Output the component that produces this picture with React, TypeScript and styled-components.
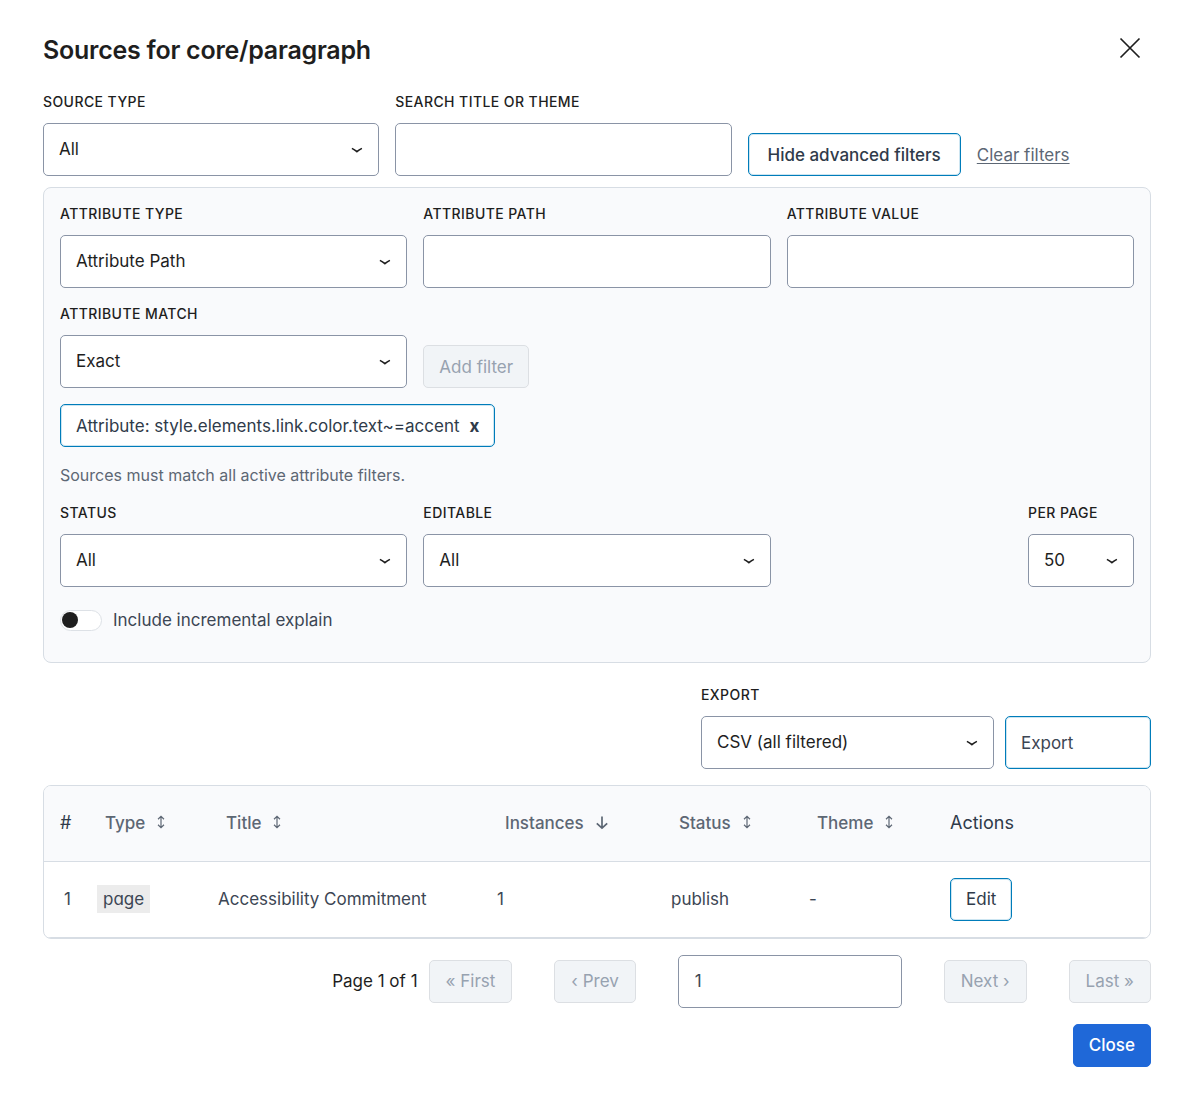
import React, { useId, useState } from "react";
import styled, { createGlobalStyle, css } from "styled-components";

const color = {
  ink: "#1e1e1e",
  text: "#3c4654",
  muted: "#5d6774",
  heading: "#2f3b4a",
  disabled: "#97a2b0",
  border: "#8a94a6",
  line: "#d7dde4",
  panel: "#f9fafc",
  accent: "#007cba",
  primary: "#1f68d8",
};

const GlobalStyle = createGlobalStyle`
  *, *::before, *::after { box-sizing: border-box; }
  body {
    margin: 0;
    background: #fff;
    color: ${color.text};
    font-family: Inter, "Liberation Sans", sans-serif;
    font-size: 17px;
    line-height: 24px;
  }
  button, input, select { font: inherit; margin: 0; }
`;

const Dialog = styled.main`
  display: flex;
  flex-direction: column;
  padding: 28px 43px 32px;
`;

const Header = styled.header`
  display: flex;
  justify-content: space-between;
  align-items: center;
  height: 40px;
  margin-bottom: 24px;
`;

const Title = styled.h1`
  margin: 0;
  padding-top: 4px;
  color: ${color.ink};
  font-size: 25px;
  line-height: 32px;
  font-weight: 600;
  letter-spacing: -0.01em;
`;

const IconButton = styled.button`
  display: flex;
  padding: 9px;
  border: 0;
  background: none;
  color: ${color.ink};
`;

const TopFilters = styled.div`
  display: grid;
  grid-template-columns: 5fr 5fr 6fr;
  align-items: end;
  gap: 16px;
  margin-bottom: 11px;
`;

const Actions = styled.div`
  display: flex;
  align-items: center;
  gap: 16px;
`;

const Panel = styled.section`
  display: flex;
  flex-direction: column;
  gap: 16px;
  padding: 16px 16px 29px;
  margin-bottom: 22px;
  border: 1px solid ${color.line};
  border-radius: 8px;
  background: ${color.panel};
`;

const FieldGrid = styled.div`
  display: grid;
  grid-template-columns: repeat(3, minmax(0, 1fr));
  align-items: end;
  gap: 16px;
`;

const FieldBox = styled.div<{ $width?: number; $end?: boolean }>`
  display: flex;
  flex-direction: column;
  gap: 11px;
  width: ${(p) => (p.$width ? `${p.$width}px` : "auto")};
  justify-self: ${(p) => (p.$end ? "end" : "stretch")};
`;

const Label = styled.label`
  color: ${color.ink};
  font-size: 14px;
  line-height: 20px;
  font-weight: 500;
  text-transform: uppercase;
  letter-spacing: 0.03em;
`;

const control = css`
  width: 100%;
  height: 53px;
  padding: 0 16px;
  border: 1px solid ${color.border};
  border-radius: 5px;
  background: #fff;
  color: ${color.ink};
`;

const Input = styled.input`
  ${control}
`;

const SelectBox = styled.div`
  display: grid;
  grid-template-columns: minmax(0, 1fr);
  align-items: center;

  > * { grid-area: 1 / 1; }
  > svg {
    justify-self: end;
    margin-right: 16px;
    pointer-events: none;
  }
`;

const NativeSelect = styled.select`
  ${control}
  appearance: none;
  padding: 0 40px 2px 15px;
`;

const Button = styled.button<{ $variant?: "primary" | "wide"; $medium?: boolean; $pad?: number }>`
  height: 43px;
  padding: 0 ${(p) => p.$pad ?? 15}px;
  border: 1px solid ${color.accent};
  border-radius: 5px;
  background: #fff;
  box-shadow: inset 0 0 0 1px #007cba33;
  color: ${color.heading};
  font-weight: ${(p) => (p.$medium ? 500 : 400)};
  white-space: nowrap;

  ${(p) =>
    p.$variant === "primary" &&
    css`
      border-color: ${color.primary};
      background: ${color.primary};
      box-shadow: none;
      color: #fff;
    `}
  ${(p) =>
    p.$variant === "wide" &&
    css`
      width: 146px;
      height: 53px;
      text-align: left;
      color: ${color.text};
    `}
  &:disabled {
    border-color: #dcdfe3;
    background: #f1f4f7;
    box-shadow: none;
    color: ${color.disabled};
  }
`;

const TextLink = styled.a`
  color: ${color.muted};
  text-decoration: underline;
  text-underline-offset: 2px;
  text-decoration-thickness: 1px;
`;

const Chip = styled.button`
  display: flex;
  align-items: center;
  align-self: flex-start;
  gap: 10px;
  height: 43px;
  padding: 0 15px;
  border: 1px solid ${color.accent};
  border-radius: 5px;
  background: #fff;
  box-shadow: inset 0 0 0 1px #007cba33;
  color: ${color.heading};
`;

const Hint = styled.p`
  margin: 0;
  color: ${color.muted};
  font-size: 16px;
`;

const ToggleLabel = styled.label`
  display: flex;
  align-items: center;
  align-self: flex-start;
  gap: 11px;
  height: 26px;
  margin-top: 4px;
`;

const Toggle = styled.input`
  appearance: none;
  display: flex;
  align-items: center;
  width: 42px;
  height: 21px;
  margin: 0;
  padding: 0 1px;
  border: 1px solid #dde1e6;
  border-radius: 11px;
  background: #fff;

  &::before {
    content: "";
    width: 16px;
    height: 16px;
    border-radius: 50%;
    background: ${color.ink};
  }
  &:checked { justify-content: flex-end; }
`;

const ExportBar = styled.div`
  display: flex;
  justify-content: flex-end;
  align-items: flex-end;
  gap: 11px;
  margin-bottom: 16px;
`;

const TableFrame = styled.div`
  overflow: hidden;
  margin-bottom: 16px;
  border: 1px solid ${color.line};
  border-radius: 8px;
`;

const Table = styled.table`
  width: 100%;
  table-layout: fixed;
  border-collapse: collapse;

  th, td {
    height: 76px;
    padding: 0 8px 0 16px;
    border-bottom: 1px solid ${color.line};
    text-align: left;
    font-weight: 400;
    white-space: nowrap;
  }
  th {
    height: 75px;
    background: ${color.panel};
    color: ${color.heading};
    font-size: 18px;
  }
  td:first-child {
    padding-right: 10px;
    text-align: right;
  }
`;

const Col = styled.col<{ $width?: number }>`
  width: ${(p) => (p.$width ? `${p.$width}px` : "auto")};
`;

const SortButton = styled.button`
  display: flex;
  align-items: center;
  gap: 11px;
  padding: 0 8px;
  border: 0;
  background: none;
  color: ${color.muted};
  font-size: 17px;
  font-weight: 500;
`;

const Code = styled.code`
  padding: 4px 6px;
  background: #ececec;
  font-family: Inter, sans-serif;
  font-feature-settings: "cv11";
`;

const Pagination = styled.nav`
  display: flex;
  justify-content: flex-end;
  align-items: center;
  gap: 11px;
  margin-bottom: 16px;
  color: ${color.ink};
`;

const PageControls = styled.div`
  display: flex;
  align-items: center;
  gap: 42px;
`;

const PageInput = styled(Input)`
  width: 224px;
  color: ${color.text};
`;

const Footer = styled.footer`
  display: flex;
  justify-content: flex-end;
`;

const Chevron = () => (
  <svg width="12" height="8" viewBox="0 0 12 8" fill="none" stroke="#1e1e1e" strokeWidth="1.6" aria-hidden="true">
    <path d="M0.9 2.4C3 3.4 4.4 4.4 5.9 5.7 7.4 4.4 8.8 3.4 10.9 2.4" />
  </svg>
);

const CloseIcon = () => (
  <svg width="24" height="24" viewBox="0 0 24 24" fill="none" stroke="currentColor" strokeWidth="1.7" aria-hidden="true">
    <path d="M2.5 2.5 21.5 21.5M21.5 2.5 2.5 21.5" />
  </svg>
);

const SortIcon = () => (
  <svg width="10" height="16" viewBox="0 0 10 16" fill="none" stroke="currentColor" strokeWidth="1.2" aria-hidden="true">
    <path d="M5 1.5V12.5M2 4.2 5 1.4 8 4.2M2 9.8 5 12.6 8 9.8" />
  </svg>
);

const DownIcon = () => (
  <svg width="14" height="14" viewBox="0 0 14 14" fill="none" stroke="currentColor" strokeWidth="1.7" aria-hidden="true">
    <path d="M7 0.5V12.5M1.8 7.3 7 12.2 12.2 7.3" />
  </svg>
);

type FieldProps = { label: string; options?: string[]; width?: number; end?: boolean };

function Field({ label, options, width, end }: FieldProps) {
  const id = useId();
  return (
    <FieldBox $width={width} $end={end}>
      <Label htmlFor={id}>{label}</Label>
      {options ? (
        <SelectBox>
          <NativeSelect id={id}>
            {options.map((o) => (
              <option key={o}>{o}</option>
            ))}
          </NativeSelect>
          <Chevron />
        </SelectBox>
      ) : (
        <Input id={id} type="text" />
      )}
    </FieldBox>
  );
}

const columns = [
  { name: "#", width: 37 },
  { name: "Type", width: 121, sort: "both" },
  { name: "Title", width: 279, sort: "both" },
  { name: "Instances", width: 174, sort: "down" },
  { name: "Status", width: 138, sort: "both" },
  { name: "Theme", width: 141, sort: "both" },
  { name: "Actions" },
];

const rows = [{ type: "page", title: "Accessibility Commitment", instances: 1, status: "publish", theme: "-" }];

export default function App() {
  const [page, setPage] = useState("1");
  return (
    <>
      <GlobalStyle />
      <Dialog>
        <Header>
          <Title>Sources for core/paragraph</Title>
          <IconButton type="button" aria-label="Close dialog">
            <CloseIcon />
          </IconButton>
        </Header>

        <TopFilters>
          <Field label="Source type" options={["All"]} />
          <Field label="Search title or theme" />
          <Actions>
            <Button type="button" $medium $pad={19}>Hide advanced filters</Button>
            <TextLink href="#clear">Clear filters</TextLink>
          </Actions>
        </TopFilters>

        <Panel>
          <FieldGrid>
            <Field label="Attribute type" options={["Attribute Path"]} />
            <Field label="Attribute path" />
            <Field label="Attribute value" />
          </FieldGrid>
          <FieldGrid>
            <Field label="Attribute match" options={["Exact"]} />
            <Actions>
              <Button type="button" disabled>Add filter</Button>
            </Actions>
          </FieldGrid>
          <Chip type="button">
            Attribute: style.elements.link.color.text~=accent <b>x</b>
          </Chip>
          <Hint>Sources must match all active attribute filters.</Hint>
          <FieldGrid>
            <Field label="Status" options={["All"]} />
            <Field label="Editable" options={["All"]} />
            <Field label="Per page" options={["50"]} width={106} end />
          </FieldGrid>
          <ToggleLabel>
            <Toggle type="checkbox" role="switch" />
            Include incremental explain
          </ToggleLabel>
        </Panel>

        <ExportBar>
          <Field label="Export" options={["CSV (all filtered)"]} width={293} />
          <Button type="button" $variant="wide">Export</Button>
        </ExportBar>

        <TableFrame>
          <Table>
            <colgroup>
              {columns.map((c) => (
                <Col key={c.name} $width={c.width} />
              ))}
            </colgroup>
            <thead>
              <tr>
                {columns.map((c) => (
                  <th key={c.name} scope="col">
                    {c.sort ? (
                      <SortButton type="button">
                        {c.name}
                        {c.sort === "down" ? <DownIcon /> : <SortIcon />}
                      </SortButton>
                    ) : (
                      c.name
                    )}
                  </th>
                ))}
              </tr>
            </thead>
            <tbody>
              {rows.map((r, i) => (
                <tr key={r.title}>
                  <td>{i + 1}</td>
                  <td><Code>{r.type}</Code></td>
                  <td>{r.title}</td>
                  <td>{r.instances}</td>
                  <td>{r.status}</td>
                  <td>{r.theme}</td>
                  <td><Button type="button">Edit</Button></td>
                </tr>
              ))}
            </tbody>
          </Table>
        </TableFrame>

        <Pagination aria-label="Pagination">
          <span>Page 1 of 1</span>
          <PageControls>
            <Button type="button" $pad={16} disabled>« First</Button>
            <Button type="button" $pad={16} disabled>‹ Prev</Button>
            <PageInput aria-label="Page number" value={page} onChange={(e) => setPage(e.target.value)} />
            <Button type="button" $pad={16} disabled>Next ›</Button>
            <Button type="button" $pad={16} disabled>Last »</Button>
          </PageControls>
        </Pagination>

        <Footer>
          <Button type="button" $variant="primary" $medium>Close</Button>
        </Footer>
      </Dialog>
    </>
  );
}
